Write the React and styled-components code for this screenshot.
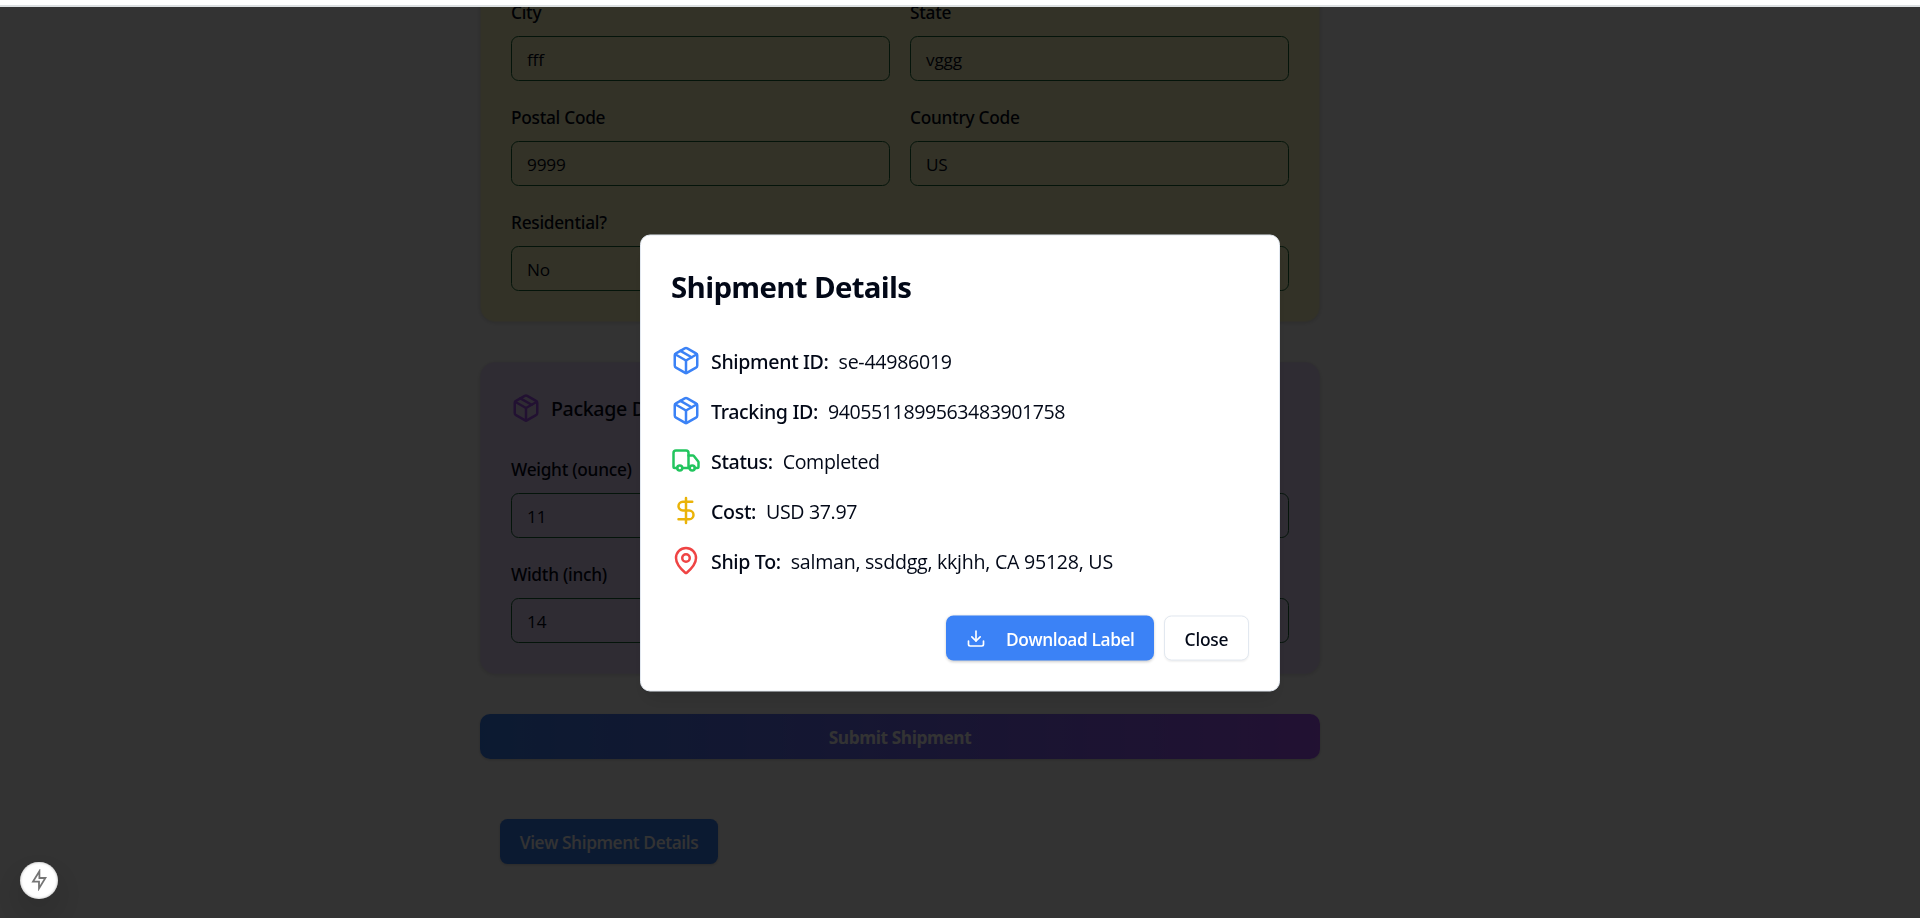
import React from "react";
import styled, { createGlobalStyle } from "styled-components";
import { Package, Truck, DollarSign, MapPin, Download } from "lucide-react";

const textFont = '"Open Sans", "Noto Sans", sans-serif';
const labelFont = '"Noto Sans", "Open Sans", sans-serif';

const GlobalStyle = createGlobalStyle`
  *, *::before, *::after { box-sizing: border-box; }
  html, body { margin: 0; height: 918px; overflow: hidden; }
  body {
    background: #fff;
    color: #020817;
    font-family: ${textFont};
    font-size: 17px;
  }
`;

const Page = styled.main`
  height: 918px;
  overflow: hidden;
`;

const TopBar = styled.header`
  position: fixed;
  inset: 0 0 auto 0;
  z-index: 20;
  height: 7px;
  background: #fff;
  border-bottom: 2px solid #dce0e2;
`;

const Form = styled.form`
  display: flex;
  flex-direction: column;
  gap: 40px;
  width: 840px;
  margin: -35px 0 0 480px;
`;

const Card = styled.section`
  padding: 30px;
  border: 1px solid ${(p) => p.$border};
  border-radius: 15px;
  background: ${(p) => p.$tone};
  box-shadow: 0 1px 4px rgba(0, 0, 0, 0.15);
`;

const CardHeader = styled.h2`
  display: flex;
  align-items: center;
  gap: 10px;
  height: 30px;
  margin: 0 0 30px;
  font: 500 19.6px/30px ${labelFont};
  letter-spacing: -0.35px;
`;

const CardTitle = styled.span`
  padding-top: 2px;
`;

const Fields = styled.div`
  display: grid;
  grid-template-columns: 1fr 1fr;
  gap: 20px;
`;

const Field = styled.div`
  display: flex;
  flex-direction: column;
  gap: 10px;
  grid-column: ${(p) => (p.$wide ? "1 / -1" : "auto")};
`;

const Label = styled.label`
  height: 30px;
  padding-top: 2px;
  font: 500 17.3px/30px ${labelFont};
  letter-spacing: -0.28px;
`;

const Control = styled.div`
  height: 45px;
  padding: 1px 15px 0;
  border: 1px solid #166534;
  border-radius: 7.5px;
  font-size: 17.2px;
  letter-spacing: -0.2px;
  line-height: 43px;
`;

const SubmitButton = styled.button`
  height: 45px;
  padding: 0;
  border: 0;
  border-radius: 10px;
  background: linear-gradient(to right, #3b82f6, #a855f7);
  box-shadow: 0 1px 3px rgba(0, 0, 0, 0.2);
  color: #fff;
  font: 700 17.2px/47px ${textFont};
  letter-spacing: -0.38px;
`;

const ViewButton = styled.button`
  width: 218px;
  height: 45px;
  margin: 60px 0 0 500px;
  padding: 0;
  border: 0;
  border-radius: 7.5px;
  background: #3b82f6;
  box-shadow: 0 1px 3px rgba(0, 0, 0, 0.2);
  color: #fff;
  font: 600 17.3px/47px ${textFont};
  letter-spacing: -0.38px;
`;

const Overlay = styled.div`
  position: fixed;
  inset: 0;
  z-index: 10;
  background: rgba(0, 0, 0, 0.8);
`;

const Dialog = styled.div`
  position: fixed;
  top: 463px;
  left: 960px;
  z-index: 15;
  display: flex;
  flex-direction: column;
  gap: 40px;
  width: 640px;
  height: 457px;
  padding: 30px;
  border: 1px solid #e2e8f0;
  border-radius: 10px;
  background: #fff;
  box-shadow: 0 12px 19px -4px rgba(0, 0, 0, 0.1), 0 5px 8px -5px rgba(0, 0, 0, 0.1);
  transform: translate(-50%, -50%);
`;

const DialogTitle = styled.h1`
  height: 40px;
  margin: 0;
  font: 700 29.4px/42px ${textFont};
  letter-spacing: -0.68px;
`;

const Details = styled.div`
  display: flex;
  flex-direction: column;
  gap: 20px;
`;

const Detail = styled.div`
  display: flex;
  align-items: center;
  gap: 10px;
  height: 30px;
  white-space: nowrap;
`;

const DetailName = styled.span`
  padding-top: 2px;
  font: 500 19.6px/30px ${labelFont};
  letter-spacing: -0.35px;
`;

const DetailValue = styled.span`
  padding-top: 2px;
  font-size: 19.6px;
  line-height: 30px;
  letter-spacing: ${(p) => p.$tracking}px;
`;

const Actions = styled.div`
  display: flex;
  justify-content: flex-end;
  gap: 10px;
`;

const DownloadButton = styled.button`
  display: flex;
  align-items: center;
  gap: 20px;
  width: 208px;
  height: 45px;
  padding: 0 0 0 20px;
  border: 0;
  border-radius: 7.5px;
  background: #3b82f6;
  box-shadow: 0 1px 3px rgba(0, 0, 0, 0.2);
  color: #fff;
  font: 600 17.3px/43px ${textFont};
  letter-spacing: -0.38px;
  white-space: nowrap;
`;

const DownloadText = styled.span`
  padding-top: 2px;
`;

const CloseButton = styled.button`
  width: 85px;
  height: 45px;
  padding: 0;
  border: 1px solid #e2e8f0;
  border-radius: 7.5px;
  background: #fff;
  box-shadow: 0 1px 2px rgba(0, 0, 0, 0.06);
  color: #020817;
  font: 500 17.4px/45px ${labelFont};
  letter-spacing: -0.2px;
`;

const DevBadge = styled.div`
  position: fixed;
  left: 20px;
  top: 861.5px;
  z-index: 20;
  display: grid;
  place-items: center;
  width: 37.5px;
  height: 37.5px;
  border-radius: 50%;
  background: #fff;
  box-shadow: inset 0 0 2px 1px rgba(0, 0, 0, 0.18), 0 14px 40px rgba(0, 0, 0, 0.25);
`;

const address = [
  ["City", "fff"],
  ["State", "vggg"],
  ["Postal Code", "9999"],
  ["Country Code", "US"],
  ["Residential?", "No", true],
];

const parcel = [
  ["Weight (ounce)", "11"],
  ["", ""],
  ["Width (inch)", "14"],
  ["", ""],
];

const details = [
  [Package, "#3b82f6", "Shipment ID:", "se-44986019", -0.28],
  [Package, "#3b82f6", "Tracking ID:", "9405511899563483901758", -0.42],
  [Truck, "#22c55e", "Status:", "Completed", -0.35],
  [DollarSign, "#eab308", "Cost:", "USD 37.97", -0.36],
  [MapPin, "#ef4444", "Ship To:", "salman, ssddgg, kkjhh, CA 95128, US", -0.26],
];

function FieldGrid({ fields }) {
  return (
    <Fields>
      {fields.map(([label, value, wide], i) => (
        <Field key={i} $wide={wide}>
          <Label>{label}</Label>
          <Control>{value}</Control>
        </Field>
      ))}
    </Fields>
  );
}

export default function App() {
  return (
    <>
      <GlobalStyle />
      <TopBar />
      <Page>
        <Form>
          <Card $tone="#fef9c3" $border="#f3f1d4">
            <FieldGrid fields={address} />
          </Card>
          <Card $tone="#ebd9ff" $border="#ebdffa">
            <CardHeader>
              <Package size={30} color="#a855f7" />
              <CardTitle>Package Details</CardTitle>
            </CardHeader>
            <FieldGrid fields={parcel} />
          </Card>
          <SubmitButton type="button">Submit Shipment</SubmitButton>
        </Form>
        <ViewButton type="button">View Shipment Details</ViewButton>
      </Page>
      <Overlay />
      <Dialog role="dialog">
        <DialogTitle>Shipment Details</DialogTitle>
        <Details>
          {details.map(([Icon, color, name, value, tracking]) => (
            <Detail key={name}>
              <Icon size={30} color={color} />
              <DetailName>{name}</DetailName>
              <DetailValue $tracking={tracking}>{value}</DetailValue>
            </Detail>
          ))}
        </Details>
        <Actions>
          <DownloadButton type="button">
            <Download size={20} />
            <DownloadText>Download Label</DownloadText>
          </DownloadButton>
          <CloseButton type="button">Close</CloseButton>
        </Actions>
      </Dialog>
      <DevBadge>
        <svg width="18" height="22" viewBox="0 0 18 22" fill="none" stroke="#757575" strokeWidth="1.8">
          <path d="M9.4 2.2 L3 12.6 H9 V19.4 L15.4 9 H9.4 Z" />
        </svg>
      </DevBadge>
    </>
  );
}
